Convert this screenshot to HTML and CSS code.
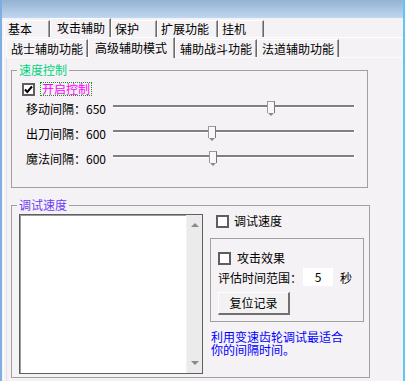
FILE: index.html
```html
<!DOCTYPE html>
<html lang="zh">
<head>
  <meta charset="UTF-8">
  <title>攻击辅助</title>
  <link rel="stylesheet" href="styles.css">
</head>
<body>
  <div class="window">
    <div class="titlebar"></div>

    <div class="tabs tabs-main">
      <span class="tab w2">基本</span>
      <span class="tab w4 active">攻击辅助</span>
      <span class="tab w2">保护</span>
      <span class="tab w4">扩展功能</span>
      <span class="tab w2">挂机</span>
    </div>

    <div class="panel">
      <div class="tabs tabs-sub">
        <span class="tab w6">战士辅助功能</span>
        <span class="tab w6 active">高级辅助模式</span>
        <span class="tab w6">辅助战斗功能</span>
        <span class="tab w6">法道辅助功能</span>
      </div>

      <div class="panel panel-inner">
        <!-- 速度控制 -->
        <fieldset class="group speed">
          <legend class="legend-green">速度控制</legend>
          <div class="check-row first">
            <span class="box">
              <svg width="9" height="9" viewBox="0 0 9 9"><path d="M1 4.5 L3.3 7 L8 1.5" fill="none" stroke="#000" stroke-width="2"/></svg>
            </span>
            <span class="focus">开启控制</span>
          </div>
          <div class="slider-row">
            <span class="slider-label">移动间隔：650</span>
            <div class="slider"><div class="track"></div><span class="thumb" style="left:154px"></span></div>
          </div>
          <div class="slider-row">
            <span class="slider-label">出刀间隔：600</span>
            <div class="slider"><div class="track"></div><span class="thumb" style="left:95px"></span></div>
          </div>
          <div class="slider-row">
            <span class="slider-label">魔法间隔：600</span>
            <div class="slider"><div class="track"></div><span class="thumb" style="left:96px"></span></div>
          </div>
        </fieldset>

        <!-- 调试速度 -->
        <fieldset class="group debug">
          <legend class="legend-purple">调试速度</legend>
          <div class="debug-body">
            <div class="log">
              <div class="log-text"></div>
              <div class="scrollbar">
                <span class="arrow up"></span>
                <span class="arrow down"></span>
              </div>
            </div>
            <div class="side">
              <div class="check-row side-check">
                <span class="box"></span>
                <span>调试速度</span>
              </div>
              <div class="subgroup">
                <div class="check-row">
                  <span class="box"></span>
                  <span class="wide">攻击效果</span>
                </div>
                <div class="range-row">
                  <span>评估时间范围：</span>
                  <span class="num">5</span>
                  <span>秒</span>
                </div>
                <div class="button">复位记录</div>
              </div>
              <p class="hint">利用变速齿轮调试最适合<br>你的间隔时间。</p>
            </div>
          </div>
        </fieldset>
      </div>
    </div>
  </div>
</body>
</html>
```

FILE: styles.css
```css
body {
  margin: 0;
  font-family: "Noto Sans CJK SC", "Liberation Sans", sans-serif;
  font-size: 12px;
  color: #000;
  background: #f5f2f5;
}
.window {
  width: 405px;
  height: 381px;
  box-sizing: border-box;
  border-left: 2px solid #7eafe0;
  border-right: 2px solid #5fc5f4;
  background: #f5f2f5;
  overflow: hidden;
}
.titlebar {
  height: 18px;
  background: linear-gradient(#95b2d3, #bfd7f0);
}

/* tabs */
.tabs {
  display: flex;
  align-items: flex-end;
  height: 19px;
  position: relative;
  z-index: 1;
}
.tabs-main {
  padding-left: 2px;
}
.tabs-sub {
  padding-left: 2px;
}
.tab {
  box-sizing: border-box;
  height: 17px;
  line-height: 16px;
  padding-left: 3px;
  border-top: 1px solid #fff;
  border-left: 1px solid #fff;
  border-right: 1px solid #696969;
  box-shadow: inset -1px 0 #a0a0a0;
  background: #f5f2f5;
  white-space: nowrap;
}
.tabs-sub .tab {
  height: 18px;
  line-height: 18px;
  padding-left: 4px;
}
.tab.w2 { width: 46px; }
.tab.w4 { width: 61px; }
.tab.w6 { width: 82px; }
.tabs-main .tab.active {
  height: 20px;
  line-height: 17px;
  margin-bottom: -1px;
  padding-left: 6px;
  padding-top: 0;
}
.tabs-sub .tab.active {
  width: 87px;
  height: 21px;
  line-height: 19px;
  margin-bottom: -1px;
  padding-left: 6px;
}

/* panels */
.panel {
  border-top: 1px solid #fff;
  border-left: 1px solid #fff;
  margin-left: 1px;
  height: 400px;
}
.panel-inner {
  margin-left: 2px;
  border-top: 1px solid #fcfcfc;
  border-left: 1px solid #e4e4e4;
}

/* group boxes */
.group {
  box-sizing: border-box;
  margin: 5px 0 0 4px;
  padding: 0;
  border: 1px solid #a0a0a0;
  min-width: 0;
}
.group legend {
  margin-left: 5px;
  padding: 0 2px;
  line-height: 14px;
}
.legend-green { color: #00d27d; }
.legend-purple { color: #6c3cf4; }

.speed {
  width: 357px;
  padding-bottom: 16px;
}
.debug {
  width: 359px;
  margin-top: 10px;
  padding-bottom: 3px;
}

/* checkboxes */
.check-row {
  display: flex;
  align-items: center;
  height: 14px;
  line-height: 14px;
}
.check-row.first {
  margin: 5px 0 0 10px;
}
.box {
  box-sizing: border-box;
  width: 13px;
  height: 13px;
  border: 2px solid #5e5e5e;
  background: #fff;
  display: flex;
  align-items: center;
  justify-content: center;
  margin-right: 5px;
}
.focus {
  color: #ff00ff;
  border: 1px dotted #00a000;
  padding: 0 1px;
  line-height: 12px;
}

/* sliders */
.slider-row {
  display: flex;
  align-items: center;
  height: 25px;
}
.slider-row:first-of-type {
  margin-top: 1px;
}
.slider-label {
  box-sizing: border-box;
  width: 101px;
  padding-left: 14px;
  white-space: nowrap;
}
.slider {
  position: relative;
  width: 242px;
  height: 15px;
}
.track {
  margin-top: 4px;
  height: 2px;
  background: #7f7f7f;
  border-bottom: 1px solid #fff;
  border-right: 1px solid #fff;
}
.thumb {
  position: absolute;
  top: 0;
  width: 6px;
  height: 11px;
  background: #f8f8f8;
  border: 1px solid #9a9a9a;
  border-bottom: none;
  border-right-color: #777;
}
.thumb::after {
  content: "";
  position: absolute;
  left: 0;
  top: 11px;
  border-left: 3px solid transparent;
  border-right: 3px solid transparent;
  border-top: 3px solid #8a8a8a;
}

/* debug area */
.debug-body {
  display: flex;
  align-items: flex-start;
}
.log {
  box-sizing: border-box;
  width: 184px;
  height: 160px;
  margin: 2px 0 0 7px;
  border: 1px solid #5f5f5f;
  box-shadow: inset 1px 1px #9c9c9c;
  background: #fff;
  display: flex;
}
.log-text {
  flex: 1;
}
.scrollbar {
  width: 15px;
  background: #ebebeb;
  border-left: 1px solid #f4f4f4;
  display: flex;
  flex-direction: column;
  justify-content: space-between;
  align-items: center;
  padding: 8px 0;
}
.arrow {
  width: 0;
  height: 0;
  border-left: 4px solid transparent;
  border-right: 4px solid transparent;
}
.arrow.up { border-bottom: 4px solid #8a8a8a; }
.arrow.down { border-top: 4px solid #8a8a8a; }

.side {
  width: 154px;
  margin-left: 7px;
}
.side-check {
  margin: 2px 0 0 6px;
}
.subgroup {
  box-sizing: border-box;
  height: 84px;
  margin-top: 10px;
  border: 1px solid #a0a0a0;
  padding: 12px 0 0 7px;
}
.wide {
  margin-left: 1px;
}
.range-row {
  display: flex;
  align-items: center;
  height: 18px;
  margin-top: 3px;
}
.num {
  box-sizing: border-box;
  width: 30px;
  height: 18px;
  line-height: 18px;
  margin-left: 1px;
  background: #fff;
  text-align: center;
  margin-right: 7px;
}
.button {
  box-sizing: border-box;
  width: 72px;
  height: 23px;
  line-height: 20px;
  margin-top: 6px;
  text-align: center;
  background: #f2f2f2;
  border-top: 1px solid #fff;
  border-left: 1px solid #fff;
  border-right: 2px solid #707070;
  border-bottom: 2px solid #707070;
}
.hint {
  margin: 8px 0 0 1px;
  color: #0000ff;
  line-height: 13px;
}
```
